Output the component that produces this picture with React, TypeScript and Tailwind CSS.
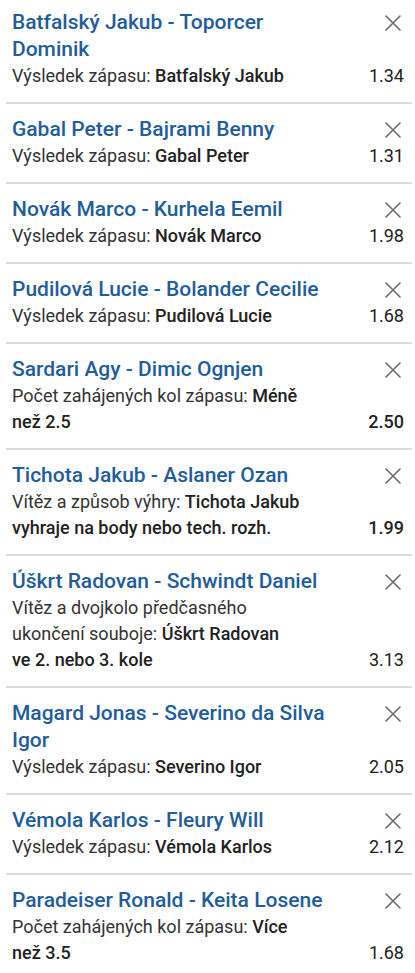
type Bet = {
  match: string;
  market: string;
  pick: string;
  odds: string;
  strong?: boolean;
};

const bets: Bet[] = [
  { match: "Batfalský Jakub - Toporcer Dominik", market: "Výsledek zápasu:", pick: "Batfalský Jakub", odds: "1.34" },
  { match: "Gabal Peter - Bajrami Benny", market: "Výsledek zápasu:", pick: "Gabal Peter", odds: "1.31" },
  { match: "Novák Marco - Kurhela Eemil", market: "Výsledek zápasu:", pick: "Novák Marco", odds: "1.98" },
  { match: "Pudilová Lucie - Bolander Cecilie", market: "Výsledek zápasu:", pick: "Pudilová Lucie", odds: "1.68" },
  { match: "Sardari Agy - Dimic Ognjen", market: "Počet zahájených kol zápasu:", pick: "Méně než 2.5", odds: "2.50", strong: true },
  { match: "Tichota Jakub - Aslaner Ozan", market: "Vítěz a způsob výhry:", pick: "Tichota Jakub vyhraje na body nebo tech. rozh.", odds: "1.99", strong: true },
  { match: "Úškrt Radovan - Schwindt Daniel", market: "Vítěz a dvojkolo předčasného ukončení souboje:", pick: "Úškrt Radovan ve 2. nebo 3. kole", odds: "3.13" },
  { match: "Magard Jonas - Severino da Silva Igor", market: "Výsledek zápasu:", pick: "Severino Igor", odds: "2.05" },
  { match: "Vémola Karlos - Fleury Will", market: "Výsledek zápasu:", pick: "Vémola Karlos", odds: "2.12" },
  { match: "Paradeiser Ronald - Keita Losene", market: "Počet zahájených kol zápasu:", pick: "Více než 3.5", odds: "1.68" },
];

function CloseIcon() {
  return (
    <svg width="16" height="16" viewBox="0 0 16 16" fill="none" aria-hidden="true">
      <path d="M1 1L15 15M15 1L1 15" stroke="#6b6b6b" strokeWidth="1.6" strokeLinecap="round" />
    </svg>
  );
}

function BetRow({ bet, first }: { bet: Bet; first: boolean }) {
  return (
    <div className={first ? "pl-[6px] pr-[8px] pt-[9px] pb-[13px]" : "pl-[6px] pr-[8px] pt-[12px] pb-[13px]"}>
      <div className="flex items-start">
        <div className="flex-1 text-[21px] font-medium leading-[27px] text-[#1f5d9c]">
          {bet.match}
        </div>
        <button className="flex h-[27px] w-[68px] items-center justify-end pr-[3px]" type="button">
          <CloseIcon />
        </button>
      </div>
      <div className="flex items-end">
        <div className="w-[288px] text-[18px] leading-[26px] text-[#333333]">
          {bet.market} <span className="font-medium text-[#222222]">{bet.pick}</span>
        </div>
        <div
          className={
            bet.strong
              ? "flex-1 text-right text-[18px] font-medium leading-[26px] text-[#222222]"
              : "flex-1 text-right text-[18px] leading-[26px] text-[#222222]"
          }
        >
          {bet.odds}
        </div>
      </div>
    </div>
  );
}

export default function App() {
  return (
    <div className="h-[973px] w-[415px] overflow-hidden bg-white font-['Roboto',sans-serif]">
      <div className="ml-[6px] mr-[3px] divide-y-2 divide-[#dcdcdc]">
        {bets.map((bet, i) => (
          <BetRow bet={bet} first={i === 0} key={bet.match} />
        ))}
      </div>
    </div>
  );
}
